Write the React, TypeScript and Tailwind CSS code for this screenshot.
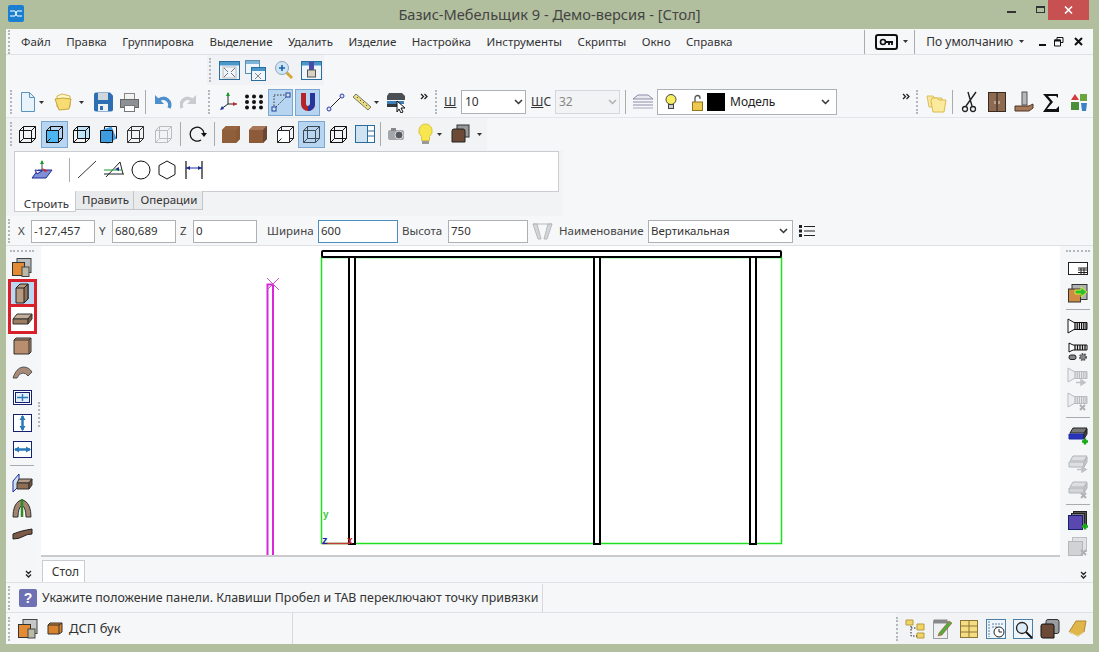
import type { ReactNode } from 'react';

type IcoProps = { w: number; h: number; className?: string; children: ReactNode };

function Ico({ w, h, className, children }: IcoProps) {
  return (
    <svg width={w} height={h} viewBox={`0 0 ${w} ${h}`} fill="none" className={`shrink-0 block ${className ?? ''}`}>
      {children}
    </svg>
  );
}

function Grip({ className = '' }: { className?: string }) {
  return <div className={`w-[2px] h-[24px] shrink-0 border-l-2 border-dotted border-[#b4b7bb] ${className}`} />;
}

function Sep({ className = '' }: { className?: string }) {
  return <div className={`w-px h-[24px] shrink-0 bg-[#a9abae] ${className}`} />;
}

function HSep({ className = '' }: { className?: string }) {
  return <div className={`w-[24px] h-px shrink-0 bg-[#a9abae] ${className}`} />;
}

function Caret({ className = '' }: { className?: string }) {
  return (
    <Ico w={5} h={3} className={className}>
      <path d="M0 0h5L2.5 3z" fill="#333" />
    </Ico>
  );
}

function More({ className = '' }: { className?: string }) {
  return (
    <Ico w={8} h={7} className={className}>
      <path d="M1 1l2.5 2.5L1 6M4.5 1L7 3.5 4.5 6" stroke="#222" strokeWidth="1.3" />
    </Ico>
  );
}

function Chevrons({ className = '' }: { className?: string }) {
  return (
    <Ico w={7} h={8} className={className}>
      <path d="M1 1l2.5 2.5L6 1M1 4.5L3.5 7 6 4.5" stroke="#222" strokeWidth="1.3" />
    </Ico>
  );
}

function Cube({ front, back, stroke = '#111', className }: { front?: string; back?: string; stroke?: string; className?: string }) {
  return (
    <Ico w={19} h={19} className={className}>
      <path d="M5.5 1.5h12v12h-12z" fill={back ?? 'none'} stroke={stroke} />
      <path d="M1.5 5.5h12v12h-12z" fill={front ?? 'none'} stroke={stroke} />
      <path d="M1.5 5.5l4-4M13.5 5.5l4-4M13.5 17.5l4-4M1.5 17.5l4-4" stroke={stroke} />
    </Ico>
  );
}

function WoodCube({ className, top = '#a8775a', side = '#6b4632', front = '#8d5a3a' }: { className?: string; top?: string; side?: string; front?: string }) {
  return (
    <Ico w={20} h={19} className={className}>
      <path d="M1 5l4-4h14v13l-4 4H1z" fill={front} />
      <path d="M1 5l4-4h14l-4 4z" fill={top} />
      <path d="M15 5l4-4v13l-4 4z" fill={side} />
    </Ico>
  );
}

function WinFrame({ className, children }: { className?: string; children?: ReactNode }) {
  return (
    <Ico w={21} h={20} className={className}>
      <rect x="0.5" y="1.5" width="20" height="18" fill="#eef5fb" stroke="#2a6d9c" />
      <rect x="1" y="2" width="19" height="3.5" fill="#4a97c9" />
      {children}
    </Ico>
  );
}

function Screw({ gray, className, children }: { gray?: boolean; className?: string; children?: ReactNode }) {
  const c = gray ? '#b9bcbf' : '#111';
  return (
    <Ico w={21} h={20} className={className}>
      <path d="M1 1l6 3.5h13v7H7L1 15z" fill={gray ? '#eceef0' : '#fff'} stroke={c} />
      <path d="M8 4.5v7M10.2 4.5v7M12.4 4.5v7M14.6 4.5v7M16.8 4.5v7M19 4.5v7" stroke={c} strokeWidth="1.3" />
      {children}
    </Ico>
  );
}

function Slab({ fill, gray, className, children }: { fill: string; gray?: boolean; className?: string; children?: ReactNode }) {
  const c = gray ? '#b2b5b8' : '#222';
  return (
    <Ico w={20} h={19} className={className}>
      <path d="M5 2h14l-3 5H2z" fill={gray ? '#dcdee0' : '#777'} stroke={c} />
      <path d="M1 8h15v5H1z" fill={fill} stroke={gray ? c : '#1c2aa8'} />
      <path d="M16 8l3-5v5l-3 5z" fill={gray ? '#c6c8cb' : '#444'} stroke={c} />
      {children}
    </Ico>
  );
}

const plus = <path d="M14 15.5h6M17 12.5v6" stroke="#18a818" strokeWidth="2.6" />;
const grayArrow = <path d="M9 15.5h7M14 13l4 2.5-4 2.5z" fill="#bfc2c5" stroke="#bfc2c5" strokeWidth="1.5" />;
const grayCross = <path d="M13 13l5 5M18 13l-5 5" stroke="#aeb1b4" strokeWidth="2" />;

function Input({ value, className = '' }: { value: string; className?: string }) {
  return (
    <div className={`h-[23px] shrink-0 bg-white border border-[#adb1b6] px-[2px] leading-[20px] text-[11.5px] text-[#333] ${className}`}>
      {value}
    </div>
  );
}

function SelectArrow({ color = '#333' }: { color?: string }) {
  return (
    <Ico w={9} h={6}>
      <path d="M1 1l3.5 3.5L8 1" stroke={color} strokeWidth="1.5" />
    </Ico>
  );
}

function TopIcons() {
  return (
    <>
      <Grip className="ml-[2px]" />
      <WinFrame className="ml-[8px]">
        <rect x="4" y="7" width="13" height="11" stroke="#bbb" />
        <path d="M5 8l4 4M16 8l-4 4M5 17l4-4M16 17l-4-4" stroke="#777" />
      </WinFrame>
      <Ico w={21} h={21} className="ml-[5px]">
        <rect x="0.5" y="0.5" width="14" height="13" fill="#eef5fb" stroke="#5a8db0" />
        <rect x="1" y="1" width="13" height="3" fill="#7fb4d8" />
        <rect x="6.5" y="7.5" width="14" height="13" fill="#eef5fb" stroke="#2a6d9c" />
        <rect x="7" y="8" width="13" height="3" fill="#4a97c9" />
        <path d="M10 13l6 6M16 13l-6 6" stroke="#888" />
      </Ico>
      <Ico w={20} h={20} className="ml-[8px]">
        <path d="M12 12l6 6" stroke="#d0a93a" strokeWidth="3" />
        <circle cx="8" cy="8" r="6.5" fill="#cfe6f7" stroke="#8aa6bb" />
        <path d="M5 8h6M8 5v6" stroke="#1f5fa8" strokeWidth="1.6" />
      </Ico>
      <WinFrame className="ml-[7px]">
        <rect x="8" y="2" width="5" height="8" fill="#4a4aa8" />
        <rect x="6.5" y="10" width="8" height="7" fill="#d8d2c4" stroke="#555" />
      </WinFrame>
    </>
  );
}

function MainRow() {
  return (
    <div className="h-[33px] pt-[2px] flex items-center border-b border-[#e3e5e8]">
      <Grip className="ml-[4px]" />
      <Ico w={16} h={20} className="ml-[8px]">
        <path d="M1.5 0.5h8l5 5v14h-13z" fill="#e9f3fb" stroke="#5c93bd" />
        <path d="M9.5 0.5v5h5" stroke="#5c93bd" />
      </Ico>
      <Caret className="ml-[3px]" />
      <Ico w={18} h={18} className="ml-[10px]">
        <path d="M3 14V3l5-2 8 2v11z" fill="#fff6c8" stroke="#d2b551" />
        <path d="M1 6l8-1 8 1-2 10-10 1z" fill="#f6dc72" stroke="#c8a63c" />
      </Ico>
      <Caret className="ml-[7px]" />
      <Ico w={20} h={20} className="ml-[9px]">
        <path d="M1 2.5q0-2 2-2h14l3 3v14q0 2-2 2H3q-2 0-2-2z" fill="#2e6fb4" />
        <rect x="5" y="1" width="10" height="7" fill="#cfd6dc" />
        <rect x="5" y="12" width="10" height="7" fill="#eef1f4" />
        <rect x="7" y="14" width="3" height="4" fill="#2e6fb4" />
      </Ico>
      <Ico w={19} h={19} className="ml-[7px]">
        <rect x="4.5" y="0.5" width="10" height="6" fill="#f2f2f2" stroke="#888" />
        <rect x="0.5" y="6.5" width="18" height="8" fill="#8d9196" stroke="#666" />
        <rect x="4.5" y="12.5" width="10" height="6" fill="#fff" stroke="#777" />
      </Ico>
      <Sep className="ml-[6px]" />
      <Ico w={19} h={18} className="ml-[7px]">
        <path d="M16 15A6.5 6.5 0 0 0 6 7" stroke="#4d8fcb" strokeWidth="3.5" />
        <path d="M2 2v9h9z" fill="#4d8fcb" />
      </Ico>
      <Ico w={18} h={18} className="ml-[8px]">
        <path d="M2 15A6.5 6.5 0 0 1 12 7" stroke="#c9cbce" strokeWidth="3.5" />
        <path d="M16 2v9H7z" fill="#c9cbce" />
      </Ico>
      <Grip className="ml-[10px]" />
      <Ico w={20} h={22} className="ml-[8px]">
        <path d="M10 13V2M10 13h9M10 13l-7 5" stroke="#222" />
        <path d="M10 1l-2 4h4z" fill="#159a2c" />
        <path d="M19 13l-4-2v4z" fill="#d02020" />
        <path d="M2 19l4-1-2-3z" fill="#1a2fb0" />
      </Ico>
      <Ico w={20} h={16} className="ml-[6px]">
        <g fill="#111">
          <circle cx="3" cy="2.5" r="2" /><circle cx="10" cy="2.5" r="2" /><circle cx="17" cy="2.5" r="2" />
          <circle cx="3" cy="8" r="2" /><circle cx="10" cy="8" r="2" /><circle cx="17" cy="8" r="2" />
          <circle cx="3" cy="13.5" r="2" /><circle cx="10" cy="13.5" r="2" /><circle cx="17" cy="13.5" r="2" />
        </g>
      </Ico>
      <div className="ml-[4px] w-[25px] h-[27px] shrink-0 bg-[#b7d5f1] border border-[#7aa6d2] flex items-center justify-center">
        <Ico w={20} h={20}>
          <path d="M3 17V4M3 17L17 3M3 3h14" stroke="#333" strokeDasharray="1.5 1.5" />
          <rect x="1" y="15" width="4" height="4" fill="#d6e6f5" stroke="#1b3fa0" />
          <rect x="15" y="1" width="4" height="4" fill="#d6e6f5" stroke="#1b3fa0" />
        </Ico>
      </div>
      <div className="ml-[2px] w-[25px] h-[27px] shrink-0 bg-[#b7d5f1] border border-[#7aa6d2] flex items-center justify-center">
        <Ico w={20} h={21}>
          <path d="M3 1v11a7 7 0 0 0 14 0V1h-5v11a2 2 0 0 1-4 0V1z" fill="#b5232b" />
          <path d="M10 19a7 7 0 0 0 7-7V1h-5v11a2 2 0 0 1-2 2z" fill="#27349c" />
        </Ico>
      </div>
      <Ico w={19} h={19} className="ml-[6px]">
        <path d="M3 16L16 3" stroke="#222" />
        <circle cx="3" cy="16" r="2" fill="#dfe6f5" stroke="#2d3ea8" />
        <circle cx="16" cy="3" r="2" fill="#dfe6f5" stroke="#2d3ea8" />
      </Ico>
      <Ico w={20} h={18} className="ml-[7px]">
        <path d="M1 4l3-3 15 13-3 3z" fill="#ecdd7c" stroke="#777" />
        <path d="M6 4l-1 1M9 7l-1 1M12 9l-1 1M15 12l-1 1" stroke="#555" />
      </Ico>
      <Caret className="ml-[2px]" />
      <Ico w={20} h={21} className="ml-[7px]">
        <path d="M3 1h13l3 3v4H1V4z" fill="#4a4f55" />
        <path d="M1 9h17v3H1z" fill="#3f7fb8" />
        <path d="M1 12h12v3H1z" fill="#33383d" />
        <path d="M11 9l8 7-4 0 2 4-2 1-2-4-2 3z" fill="#fff" stroke="#111" />
      </Ico>
      <More className="ml-[14px] -mt-[11px]" />
      <Grip className="ml-[7px]" />
      <span className="ml-[7px] w-[12px] shrink-0 text-[12px] underline text-[#333]">Ш</span>
      <div className="ml-[5px] w-[65px] h-[24px] shrink-0 bg-white border border-[#adb1b6] flex items-center justify-between pl-[3px] pr-[2px] text-[12px] text-[#333]">
        10 <SelectArrow />
      </div>
      <span className="ml-[5px] w-[18px] shrink-0 text-[12px] text-[#333]"><u>Ш</u>С</span>
      <div className="ml-[6px] w-[65px] h-[24px] shrink-0 bg-[#f2f3f5] border border-[#d5d7da] flex items-center justify-between pl-[3px] pr-[2px] text-[12px] text-[#888]">
        32 <SelectArrow color="#b0b0b0" />
      </div>
      <Sep className="ml-[5px]" />
      <Ico w={22} h={18} className="ml-[6px]">
        <path d="M6 2h10l5 4H1z" fill="#e8e8ef" stroke="#8b8ba8" />
        <path d="M1 9h20M1 12h20" stroke="#8b8ba8" />
        <path d="M1 15h20" stroke="#a8a8c0" />
      </Ico>
      <div className="ml-[3px] w-[180px] h-[26px] shrink-0 bg-white border border-[#adb1b6] flex items-center pl-[7px] pr-[6px] text-[12px] text-[#222]">
        <Ico w={12} h={16}>
          <circle cx="6" cy="5.5" r="5" fill="#f7ee5d" stroke="#444" />
          <rect x="3.5" y="10.5" width="5" height="4" fill="#ccc" stroke="#444" />
        </Ico>
        <Ico w={11} h={17} className="ml-[15px]">
          <path d="M3 8V4a2.5 2.5 0 0 1 5 0v1" stroke="#555" strokeWidth="1.3" />
          <rect x="0.5" y="8" width="10" height="8.5" fill="#eec94f" stroke="#927320" />
        </Ico>
        <div className="ml-[4px] w-[18px] h-[18px] bg-black shrink-0" />
        <span className="ml-[5px]">Модель</span>
        <span className="ml-auto"><SelectArrow /></span>
      </div>
      <More className="ml-[65px] -mt-[11px]" />
      <Grip className="ml-[6px]" />
      <Ico w={21} h={21} className="ml-[8px]">
        <path d="M1 4h6l2 2h7v9H3z" fill="#f8e79c" stroke="#dcc05c" />
        <path d="M5 9l1-3h5l2 2h7l-2 12H7z" fill="#fbea9c" stroke="#d9bb50" />
      </Ico>
      <Sep className="ml-[5px]" />
      <Ico w={17} h={22} className="ml-[8px]">
        <path d="M15 1L5 15M7 1l4 14" stroke="#222" strokeWidth="1.4" />
        <circle cx="4" cy="18" r="2.5" stroke="#222" strokeWidth="1.3" />
        <circle cx="12" cy="18" r="2.5" stroke="#222" strokeWidth="1.3" />
      </Ico>
      <Ico w={18} h={20} className="ml-[10px]">
        <rect x="0.5" y="0.5" width="17" height="19" fill="#8d6a52" stroke="#3a2a20" />
        <path d="M9 1v18" stroke="#2c1f17" />
        <path d="M7 9v3M11 9v3" stroke="#e5d7c9" />
      </Ico>
      <Ico w={20} h={22} className="ml-[8px]">
        <rect x="8" y="1" width="5" height="13" fill="#b8b8b8" stroke="#555" />
        <path d="M1 15h14l4-2v4l-4 3H1z" fill="#a67a58" stroke="#4d3526" />
      </Ico>
      <Ico w={18} h={19} className="ml-[8px]">
        <path d="M1 1h15v4l-2-2H6l5 6-6 7h9l3-3v6H1l7-10z" fill="#111" />
      </Ico>
      <Ico w={18} h={19} className="ml-[10px]">
        <path d="M5 1l4 6H1z" fill="#d63a3a" />
        <rect x="10" y="1" width="7" height="7" fill="#69a63d" />
        <rect x="1" y="9" width="8" height="8" fill="#4b8f3a" />
        <path d="M11 10h6l-1 8h-4z" fill="#3b82c4" />
      </Ico>
    </div>
  );
}

function ViewRow() {
  return (
    <div className="h-[32px] flex items-center">
      <div className="w-[481px] h-[32px] flex items-center shrink-0 bg-[#f1f3f5]">
        <Grip className="ml-[4px]" />
        <Cube className="ml-[6px]" />
        <div className="ml-[4px] w-[27px] h-[27px] shrink-0 bg-[#b7d5f1] border border-[#7aa6d2] flex items-center justify-center">
          <Cube front="#4bb6f2" />
        </div>
        <Cube className="ml-[4px]" back="#bfe3f8" />
        <Ico w={19} h={19} className="ml-[8px]">
          <path d="M5.5 1.5h12v12h-12z" stroke="#111" />
          <path d="M1.5 5.5l11-4 5 12-8 5-8-1z" fill="#3f9be0" />
          <path d="M1.5 5.5h12v12h-12z" stroke="#111" />
        </Ico>
        <Cube className="ml-[8px]" stroke="#333" />
        <Cube className="ml-[9px]" stroke="#bbbdc0" />
        <Sep className="ml-[7px]" />
        <Ico w={19} h={18} className="ml-[7px]">
          <path d="M16 8A7 7 0 1 0 13 15" stroke="#111" strokeWidth="1.3" />
          <path d="M13 8h6l-3 4z" fill="#111" />
        </Ico>
        <Sep className="ml-[7px]" />
        <WoodCube className="ml-[6px]" top="#96643f" side="#8a5a38" front="#8f5f3b" />
        <WoodCube className="ml-[7px]" />
        <Cube className="ml-[8px]" stroke="#222" front="#fff" />
        <div className="ml-[3px] w-[27px] h-[27px] shrink-0 bg-[#b7d5f1] border border-[#7aa6d2] flex items-center justify-center">
          <Cube stroke="#3c4a55" />
        </div>
        <Cube className="ml-[4px]" />
        <Ico w={20} h={20} className="ml-[7px]">
          <rect x="0.5" y="1.5" width="19" height="17" fill="#fff" stroke="#2a6d9c" />
          <rect x="1" y="2" width="11" height="16" fill="#cfe3f2" />
          <path d="M12.5 2v16M12.5 7h7M12.5 12h7" stroke="#2a6d9c" />
        </Ico>
        <Sep className="ml-[5px]" />
        <Ico w={20} h={14} className="ml-[6px]">
          <rect x="1" y="3" width="16" height="10" rx="2" fill="#a3a7ac" />
          <circle cx="12" cy="8" r="4" fill="#555a60" stroke="#ddd" />
          <rect x="4" y="1" width="5" height="3" fill="#888" />
        </Ico>
        <Ico w={17} h={22} className="ml-[10px]">
          <path d="M8.5 1a7 7 0 0 0-4 12.5v4h8v-4a7 7 0 0 0-4-12.5z" fill="#f7e64d" stroke="#d9c34a" />
          <rect x="5" y="18" width="7" height="3" fill="#999" />
        </Ico>
        <Caret className="ml-[3px]" />
        <Ico w={19} h={20} className="ml-[9px]">
          <rect x="6" y="1" width="12" height="12" fill="#999" stroke="#333" />
          <path d="M1 7q0-2 2-2h9q2 0 2 2v11H1z" fill="#6d4a36" stroke="#222" />
        </Ico>
        <Caret className="ml-[7px]" />
      </div>
    </div>
  );
}

function BuildPanel() {
  return (
    <div className="h-[66px] w-[557px] bg-[#f1f3f5] pl-[8px] pt-px">
      <div className="w-[545px] h-[41px] bg-white border border-[#c9ccd0] flex items-center pl-[16px]">
        <Ico w={22} h={21} className="-mt-[4px]">
          <path d="M1 19l6-8h14l-6 8z" fill="#7e8fd6" stroke="#1a2a96" />
          <path d="M11 12V2" stroke="#444" />
          <path d="M11 1l-2 4h4z" fill="#1c9a2e" />
          <path d="M11 9l6 3-3 1z" fill="#d02020" />
          <path d="M4 11l7 1-5 3z" fill="#e8e8ff" stroke="#1a2a96" />
        </Ico>
        <Sep className="ml-[16px] -mt-[4px]" />
        <Ico w={20} h={19} className="ml-[7px] -mt-[4px]">
          <path d="M1 18L19 1" stroke="#333" />
        </Ico>
        <Ico w={20} h={17} className="ml-[7px] -mt-[4px]">
          <path d="M0 13h20M2 16L16 1l3 12" stroke="#222" />
          <path d="M0 9h18" stroke="#1a9a2c" />
          <path d="M11 8l4-2v4z" fill="#1a2a96" />
        </Ico>
        <Ico w={20} h={20} className="ml-[7px] -mt-[4px]">
          <circle cx="10" cy="10" r="9" stroke="#111" />
        </Ico>
        <Ico w={18} h={20} className="ml-[7px] -mt-[4px]">
          <path d="M9 1l8 4.5v9L9 19l-8-4.5v-9z" stroke="#111" />
        </Ico>
        <Ico w={18} h={18} className="ml-[9px] -mt-[4px]">
          <path d="M1 0v18M17 0v18" stroke="#111" strokeWidth="1.2" />
          <path d="M1 7h16" stroke="#1a2a96" />
          <path d="M1 7l4-2v4zM17 7l-4-2v4z" fill="#1a2a96" />
        </Ico>
      </div>
      <div className="flex items-start text-[11.5px] text-[#333] -mt-px">
        <div className="w-[62px] h-[21px] bg-white border border-t-0 border-[#c9ccd0] text-center leading-[26px] pl-[3px]">Строить</div>
        <div className="w-[58px] h-[19px] bg-[#e9eaec] border border-t-0 border-l-0 border-[#c3c5c8] text-center leading-[18px] pl-[2px]">Править</div>
        <div className="w-[69px] h-[19px] bg-[#e9eaec] border border-t-0 border-l-0 border-[#c3c5c8] text-center leading-[18px] pl-[2px]">Операции</div>
      </div>
    </div>
  );
}

function PropsRow() {
  return (
    <div className="h-[30px] pt-px flex items-center text-[11.5px] text-[#444] border-b border-[#dfe1e4]">
      <Grip className="ml-[2px] h-[22px]" />
      <span className="ml-[8px] w-[13px] shrink-0">X</span>
      <Input className="w-[64px]" value="-127,457" />
      <span className="ml-[4px] w-[13px] shrink-0">Y</span>
      <Input className="w-[64px]" value="680,689" />
      <span className="ml-[4px] w-[13px] shrink-0">Z</span>
      <Input className="w-[64px]" value="0" />
      <span className="ml-[10px] w-[51px] shrink-0">Ширина</span>
      <div className="w-[80px] h-[23px] shrink-0 bg-white border border-[#4a8fc0] px-[2px] leading-[20px] text-[11.5px] text-[#333]">600</div>
      <span className="ml-[4px] w-[46px] shrink-0">Высота</span>
      <Input className="w-[80px]" value="750" />
      <Ico w={21} h={19} className="ml-[4px]">
        <path d="M1 2l5 15h3L5 2zM20 2l-5 15h-3l4-15z" fill="#d4d6d8" stroke="#b7b9bc" />
        <path d="M1 2h19" stroke="#b7b9bc" />
      </Ico>
      <span className="ml-[6px] w-[89px] shrink-0">Наименование</span>
      <div className="w-[145px] h-[23px] shrink-0 bg-white border border-[#adb1b6] flex items-center justify-between pl-[2px] pr-[4px] text-[11.5px] text-[#333]">
        Вертикальная <SelectArrow />
      </div>
      <Ico w={16} h={14} className="ml-[6px]">
        <path d="M5 2.5h11M5 7h11M5 11.5h11" stroke="#222" strokeWidth="1.2" />
        <path d="M0 1h3v3H0zM0 5.5h3v3H0zM0 10h3v3H0z" fill="#222" />
      </Ico>
    </div>
  );
}

function LeftBar() {
  return (
    <div className="w-[32px] shrink-0 flex flex-col items-center bg-[#f5f6f8]">
      <div className="mt-[4px] w-[24px] h-[2px] border-t-2 border-dotted border-[#b4b7bb] shrink-0" />
      <Ico w={20} h={19} className="mt-[6px]">
        <rect x="5" y="0.5" width="14" height="14" fill="#b9bcbc" stroke="#444" />
        <rect x="0.5" y="4.5" width="12" height="13" fill="#e38a34" stroke="#333" />
        <rect x="10" y="9" width="7" height="9.5" fill="#b9b9a5" stroke="#444" />
      </Ico>
      <div className="mt-[2px] w-[29px] h-[28px] shrink-0 bg-[#bcd7f1] border-[3px] border-[#d8202a] flex items-center justify-center">
        <Ico w={14} h={21}>
          <path d="M1 5l4-4h8v15l-4 4H1z" fill="#b79a80" stroke="#222" />
          <path d="M9 5l4-4v15l-4 4z" fill="#8d7158" stroke="#222" />
          <path d="M1 5h8" stroke="#222" />
        </Ico>
      </div>
      <div className="w-[29px] h-[27px] shrink-0 bg-white border-x-[3px] border-b-[3px] border-[#d8202a] flex items-center justify-center">
        <Ico w={21} h={12}>
          <path d="M5 1h15l-4 5H1z" fill="#c3ad96" stroke="#333" />
          <path d="M1 6h15v5H1z" fill="#9d7d60" stroke="#333" />
          <path d="M16 6l4-5v5l-4 5z" fill="#7a5d45" stroke="#333" />
        </Ico>
      </div>
      <Ico w={19} h={18} className="mt-[3px]">
        <path d="M1 3l2-2h15v14l-2 2H1z" fill="#b98e6e" stroke="#333" />
        <path d="M1 3h15v14M16 3l2-2" stroke="#333" />
      </Ico>
      <Ico w={21} h={13} className="mt-[11px]">
        <path d="M1 12Q4 2 11 1q6 0 9 5l-4 4q-2-3-5-3-4 0-6 5z" fill="#a88a76" stroke="#555" />
      </Ico>
      <Ico w={19} h={15} className="mt-[11px]">
        <rect x="0.5" y="0.5" width="18" height="14" fill="#fff" stroke="#15206e" />
        <rect x="2.5" y="2.5" width="14" height="10" fill="#e2eef8" stroke="#15206e" />
        <path d="M4 7.5h11M9.5 4v7" stroke="#2979bb" strokeWidth="1.4" />
      </Ico>
      <Ico w={19} h={18} className="mt-[9px]">
        <rect x="0.5" y="0.5" width="18" height="17" fill="#fff" stroke="#15206e" />
        <path d="M9.5 2v14" stroke="#2979bb" strokeWidth="2.5" />
        <path d="M9.5 1l-3 5h6zM9.5 17l-3-5h6z" fill="#2979bb" />
      </Ico>
      <Ico w={19} h={17} className="mt-[9px]">
        <rect x="0.5" y="0.5" width="18" height="16" fill="#fff" stroke="#15206e" />
        <path d="M2 8.5h15" stroke="#2979bb" strokeWidth="2.5" />
        <path d="M1 8.5l5-3v6zM18 8.5l-5-3v6z" fill="#2979bb" />
      </Ico>
      <HSep className="mt-[7px]" />
      <Ico w={21} h={19} className="mt-[7px]">
        <path d="M1 8l6-7v12l-6 6z" fill="#cfe0f5" stroke="#1a2a96" />
        <path d="M7 6h13l-3 4H5z" fill="#b49c86" stroke="#333" />
        <path d="M5 10h12v6H5z" fill="#8f6e53" stroke="#333" />
        <path d="M17 10l3-4v6l-3 4z" fill="#71553f" stroke="#333" />
      </Ico>
      <Ico w={20} h={20} className="mt-[6px]">
        <path d="M1 19q0-12 6-16 3-2 6 0 6 4 6 16h-5q0-9-4-12-4 3-4 12z" fill="#a38672" stroke="#333" />
        <path d="M10 1v18" stroke="#2e8b24" strokeWidth="2.5" />
      </Ico>
      <Ico w={21} h={12} className="mt-[10px]">
        <path d="M1 6q5-2 9-3t10-2v5q-5 0-9 2.5T1 11z" fill="#7d5a47" stroke="#222" />
      </Ico>
      <Chevrons className="mt-[30px] ml-[12px]" />
    </div>
  );
}

function RightBar() {
  return (
    <div className="w-[31px] shrink-0 flex flex-col items-center bg-[#f5f6f8]">
      <div className="mt-[4px] w-[24px] h-[2px] border-t-2 border-dotted border-[#b4b7bb] shrink-0" />
      <Ico w={20} h={13} className="mt-[10px]">
        <rect x="0.5" y="0.5" width="19" height="12" fill="#fff" stroke="#222" />
        <path d="M10 8h9.5M10 10.5h9.5M13 6v6.5M16 6v6.5M10 6h9.5" stroke="#222" />
      </Ico>
      <Ico w={20} h={19} className="mt-[9px]">
        <rect x="4" y="0.5" width="15" height="15" fill="#b0b3b3" stroke="#333" />
        <rect x="0.5" y="5" width="12" height="13" fill="#cf8b44" stroke="#333" />
        <path d="M7 6h6V3l6 5-6 5v-3H7z" fill="#22c22a" stroke="#e4e23a" />
      </Ico>
      <HSep className="mt-[6px]" />
      <Screw className="mt-[8px]" />
      <Ico w={20} h={20} className="mt-[4px]">
        <path d="M1 1l4 2h14v5H5l-4 2z" fill="#fff" stroke="#111" />
        <path d="M7 3v5M9.5 3v5M12 3v5M14.5 3v5M17 3v5" stroke="#111" strokeWidth="1.3" />
        <rect x="1" y="13" width="7" height="4.5" rx="2" fill="#888" stroke="#222" />
        <circle cx="15" cy="15" r="3" fill="#888" stroke="#555" strokeWidth="2" strokeDasharray="1.5 1" />
      </Ico>
      <Screw gray className="mt-[5px]">{grayArrow}</Screw>
      <Screw gray className="mt-[5px]">{grayCross}</Screw>
      <HSep className="mt-[5px]" />
      <Slab fill="#2a34b8" className="mt-[8px]">{plus}</Slab>
      <Slab fill="#dcdee0" gray className="mt-[9px]">{grayArrow}</Slab>
      <Slab fill="#d2d4d6" gray className="mt-[7px]">{grayCross}</Slab>
      <HSep className="mt-[5px]" />
      <Ico w={20} h={20} className="mt-[6px]">
        <rect x="5.5" y="0.5" width="13" height="13" fill="#555" stroke="#222" />
        <rect x="3.5" y="2.5" width="13" height="13" fill="#777" stroke="#222" />
        <rect x="0.5" y="4.5" width="14" height="14" fill="#5a48b0" stroke="#15206e" />
        {plus}
      </Ico>
      <Ico w={20} h={21} className="mt-[6px]">
        <rect x="4.5" y="0.5" width="14" height="14" fill="#dfe1e3" stroke="#bcbec1" />
        <rect x="0.5" y="4.5" width="14" height="14" fill="#d0d2d4" stroke="#b4b6b9" />
        {grayCross}
      </Ico>
      <Chevrons className="mt-[13px] ml-[11px]" />
    </div>
  );
}

function Drawing() {
  return (
    <svg width={1019} height={309} viewBox="41 246 1019 309" className="block bg-white shrink-0">
      <path d="M267.5 555V284.5h5.5V555" stroke="#d828d8" strokeWidth="2" fill="none" />
      <path d="M267 278l12 12M279 278l-12 12" stroke="#cf4fcf" strokeWidth="1" />
      <rect x="321.5" y="257.5" width="460" height="286" fill="none" stroke="#1fe01f" strokeWidth="1.5" />
      <rect x="322" y="251" width="459" height="6" rx="1" fill="#fff" stroke="#000" strokeWidth="2" />
      <rect x="349" y="257" width="6" height="287" fill="#fff" stroke="#000" strokeWidth="2" />
      <rect x="594" y="257" width="6" height="287" fill="#fff" stroke="#000" strokeWidth="2" />
      <rect x="750" y="257" width="6" height="287" fill="#fff" stroke="#000" strokeWidth="2" />
      <path d="M322 543.5h28" stroke="#c43a3a" strokeWidth="1.5" />
      <text x="323" y="518" fontFamily="Liberation Sans" fontSize="10" fontWeight="700" fill="#42c442">y</text>
      <text x="322" y="544" fontFamily="Liberation Sans" fontSize="11" fontWeight="700" fill="#1a1fb0">z</text>
      <text x="347" y="544" fontFamily="Liberation Sans" fontSize="10" fontWeight="700" fill="#c42020">x</text>
    </svg>
  );
}

function StatusRows() {
  return (
    <>
      <div className="h-[31px] pt-px flex items-center border-y border-[#dfe1e4]">
        <div className="w-[537px] h-full flex items-center border-r border-[#d6d8db]">
          <Grip className="ml-[2px] h-[22px]" />
          <Ico w={18} h={18} className="ml-[9px]">
            <rect width="18" height="18" rx="2" fill="#6e70b4" />
            <text x="9" y="14" textAnchor="middle" fontFamily="Liberation Sans" fontSize="14" fontWeight="700" fill="#fff">?</text>
          </Ico>
          <span className="ml-[5px] text-[12.4px] text-[#333] whitespace-nowrap">Укажите положение панели. Клавиши Пробел и TAB переключают точку привязки</span>
        </div>
      </div>
      <div className="h-[31px] flex items-center">
        <div className="w-[287px] h-full flex items-center border-r border-[#d6d8db] shrink-0">
          <Grip className="ml-[2px] h-[22px]" />
          <Ico w={20} h={20} className="ml-[8px]">
            <rect x="5" y="0.5" width="14" height="14" fill="#c6c8c8" stroke="#444" />
            <rect x="0.5" y="5.5" width="12" height="13" fill="#e38a34" stroke="#333" />
            <rect x="10" y="10" width="7" height="9" fill="#b9b9a5" stroke="#444" />
          </Ico>
          <Ico w={16} h={13} className="ml-[9px]">
            <path d="M3 1h12v9l-3 2H1V3z" fill="#d9822c" stroke="#333" />
            <path d="M1 3h11v9M12 3l3-2" stroke="#333" />
          </Ico>
          <span className="ml-[6px] text-[13px] text-[#333]">ДСП бук</span>
        </div>
        <div className="flex-1 h-full" />
        <div className="w-[197px] h-full shrink-0 flex items-center bg-[#f1f3f5]">
          <Grip className="h-[22px]" />
          <Ico w={20} h={20} className="ml-[7px]">
            <path d="M1 1h7v5H1zM12 5h7v6h-7zM12 14h7v5h-7z" fill="#f1d466" stroke="#b59a3c" />
            <path d="M6 7v10h6M6 9h6" stroke="#222" strokeDasharray="1.5 1.5" />
          </Ico>
          <Ico w={19} h={20} className="ml-[8px]">
            <rect x="0.5" y="2.5" width="14" height="17" fill="#eef0f2" stroke="#9a9da1" />
            <rect x="0.5" y="0.5" width="14" height="4" fill="#888" />
            <path d="M6 14l10-12 3 2-10 12-4 1z" fill="#4fae3c" stroke="#c9303a" strokeWidth="0.5" />
          </Ico>
          <Ico w={18} h={18} className="ml-[8px]">
            <rect x="0.5" y="0.5" width="17" height="17" fill="#f6dd82" stroke="#8c7436" />
            <path d="M0.5 6h17M0.5 12h17M9 0.5v17" stroke="#8c7436" />
          </Ico>
          <Ico w={20} h={20} className="ml-[8px]">
            <rect x="0.5" y="0.5" width="19" height="19" fill="#eef5fb" stroke="#4a7fa8" />
            <path d="M3 2v16M6 5h11M6 8h5" stroke="#5a7fa0" strokeDasharray="2 1" />
            <circle cx="13" cy="13" r="5" fill="#fff" stroke="#222" />
            <path d="M13 10v3h3" stroke="#222" />
          </Ico>
          <Ico w={20} h={20} className="ml-[7px]">
            <rect x="0.5" y="0.5" width="19" height="19" fill="#eef5fb" stroke="#4a7fa8" />
            <circle cx="9" cy="9" r="5.5" fill="#dcecf7" stroke="#222" strokeWidth="1.3" />
            <path d="M13 13l6 6" stroke="#111" strokeWidth="2" />
          </Ico>
          <Ico w={20} h={20} className="ml-[7px]">
            <rect x="6" y="0.5" width="13" height="14" rx="2" fill="#9a9da0" stroke="#333" />
            <path d="M1 7q0-2 2-2h9q2 0 2 2v12H3q-2 0-2-2z" fill="#6d4a36" stroke="#111" />
          </Ico>
          <Ico w={19} h={17} className="ml-[8px]">
            <path d="M1 12L8 1h10l-2 11-6 4z" fill="#e0b64a" stroke="#b08a2d" />
            <path d="M1 12l9 4 6-4" stroke="#f3e2a8" />
          </Ico>
        </div>
      </div>
    </>
  );
}

export default function App() {
  return (
    <div className="w-[1099px] h-[652px] bg-[#b2bf9e] overflow-hidden flex flex-col font-['Noto_Sans','Open_Sans',sans-serif]">
      <div className="h-[29px] shrink-0 grid grid-cols-[1fr_auto_1fr]">
        <div className="pl-[8px] pt-[5px]">
          <Ico w={16} h={17}>
            <rect width="16" height="17" rx="2" fill="#1a7fd0" />
            <path d="M2 6h5l2 5h5M2 11h5l2-5h5" stroke="#fff" />
          </Ico>
        </div>
        <div className="pt-[4px] text-[14.6px] leading-[20px] text-[#444]">Базис-Мебельщик 9 - Демо-версия - [Стол]</div>
        <div className="flex justify-end pr-[10px]">
          <div className="mt-[11px] mr-[20px] w-[9px] h-[2px] bg-[#333]" />
          <div className="mt-[6px] w-[9px] h-[7px] border border-[#333] border-t-2 mr-[3px]" />
          <div className="w-[41px] h-[20px] bg-[#c75050] flex items-center justify-center">
            <Ico w={9} h={8}>
              <path d="M1 0.5l7 7M8 0.5l-7 7" stroke="#fff" strokeWidth="1.6" />
            </Ico>
          </div>
        </div>
      </div>

      <div className="mx-[6px] h-[615px] shrink-0 bg-[#f6f7f9] flex flex-col">
        <div className="h-[26px] shrink-0 flex items-center border-b border-[#dfe1e4] text-[11.5px] text-[#333]">
          <Grip className="ml-[2px] h-[20px]" />
          <div className="ml-[11px] flex gap-[15.5px]">
            <span>Файл</span>
            <span>Правка</span>
            <span>Группировка</span>
            <span>Выделение</span>
            <span>Удалить</span>
            <span>Изделие</span>
            <span>Настройка</span>
            <span>Инструменты</span>
            <span>Скрипты</span>
            <span>Окно</span>
            <span>Справка</span>
          </div>
          <Sep className="ml-auto h-[20px]" />
          <div className="ml-[10px] w-[23px] h-[16px] shrink-0 border-2 border-[#111] rounded-[3px] flex items-center justify-center">
            <Ico w={15} h={8}>
              <circle cx="4" cy="4" r="2.5" stroke="#111" strokeWidth="1.6" />
              <path d="M6 4h8M10 4v3M13 4v3" stroke="#111" strokeWidth="1.8" />
            </Ico>
          </div>
          <Caret className="ml-[5px]" />
          <Sep className="ml-[6px] h-[20px]" />
          <span className="ml-[11px] text-[12px]">По умолчанию</span>
          <Caret className="ml-[6px]" />
          <div className="ml-[15px] w-[7px] h-[2px] bg-[#111] mt-[6px]" />
          <Ico w={10} h={10} className="ml-[8px]">
            <path d="M3 2.5V0.5h6v5H7M0.5 3h6v6h-6z" stroke="#111" />
            <path d="M0.5 3.5h6" stroke="#111" strokeWidth="2" />
          </Ico>
          <Ico w={9} h={9} className="ml-[10px] mr-[10px]">
            <path d="M1 1l7 7M8 1l-7 7" stroke="#111" strokeWidth="2" />
          </Ico>
        </div>
        <div className="h-[30px] shrink-0 flex items-center">
          <div className="ml-[201px] w-[117px] h-[30px] flex items-center bg-[#f0f2f5]">
            <TopIcons />
          </div>
        </div>
        <MainRow />
        <ViewRow />
        <BuildPanel />
        <PropsRow />
        <div className="h-[336px] shrink-0 flex">
          <LeftBar />
          <div className="w-[3px] shrink-0 flex items-center">
            <div className="h-[25px] w-[2px] border-l-2 border-dotted border-[#b4b7bb]" />
          </div>
          <div className="w-[1019px] shrink-0 flex flex-col">
            <Drawing />
            <div className="h-[27px] border-t-2 border-[#c9cbce] pl-px pt-[3px]">
              <div className="w-[43px] h-[22px] bg-white border border-b-0 border-[#c9ccd0] pl-[4px] text-center text-[12px] leading-[21px] text-[#333]">Стол</div>
            </div>
          </div>
          <div className="w-[2px] shrink-0" />
          <RightBar />
        </div>
        <StatusRows />
      </div>
    </div>
  );
}
